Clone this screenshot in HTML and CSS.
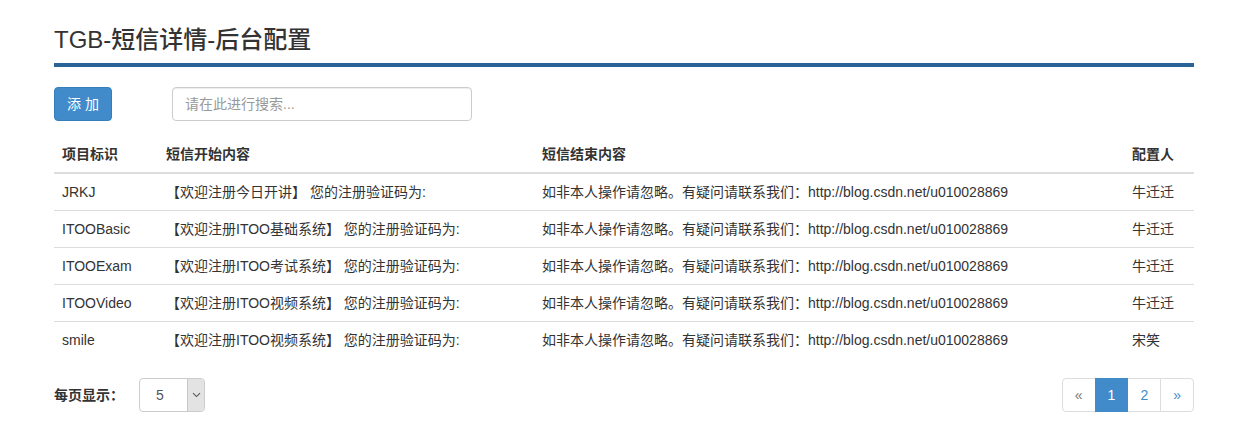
FILE: index.html
```html
<!DOCTYPE html>
<html lang="zh-CN">
<head>
<meta charset="utf-8">
<title>TGB-短信详情-后台配置</title>
<link rel="stylesheet" href="styles.css">
</head>
<body>
<div class="page">
  <h1 class="page-title">TGB-短信详情-后台配置</h1>

  <div class="toolbar">
    <button class="btn-primary" type="button">添 加</button>
    <input class="search" type="text" placeholder="请在此进行搜索...">
  </div>

  <table class="grid">
    <colgroup>
      <col class="c-id">
      <col class="c-start">
      <col class="c-end">
      <col class="c-user">
    </colgroup>
    <thead>
      <tr><th>项目标识</th><th>短信开始内容</th><th>短信结束内容</th><th>配置人</th></tr>
    </thead>
    <tbody>
      <tr><td>JRKJ</td><td>【欢迎注册今日开讲】 您的注册验证码为:</td><td>如非本人操作请忽略。有疑问请联系我们：http://blog.csdn.net/u010028869</td><td>牛迁迁</td></tr>
      <tr><td>ITOOBasic</td><td>【欢迎注册ITOO基础系统】 您的注册验证码为:</td><td>如非本人操作请忽略。有疑问请联系我们：http://blog.csdn.net/u010028869</td><td>牛迁迁</td></tr>
      <tr><td>ITOOExam</td><td>【欢迎注册ITOO考试系统】 您的注册验证码为:</td><td>如非本人操作请忽略。有疑问请联系我们：http://blog.csdn.net/u010028869</td><td>牛迁迁</td></tr>
      <tr><td>ITOOVideo</td><td>【欢迎注册ITOO视频系统】 您的注册验证码为:</td><td>如非本人操作请忽略。有疑问请联系我们：http://blog.csdn.net/u010028869</td><td>牛迁迁</td></tr>
      <tr><td>smile</td><td>【欢迎注册ITOO视频系统】 您的注册验证码为:</td><td>如非本人操作请忽略。有疑问请联系我们：http://blog.csdn.net/u010028869</td><td>宋笑</td></tr>
    </tbody>
  </table>

  <div class="footer-bar">
    <div class="page-size">
      <span class="page-size-label">每页显示：</span>
      <div class="select-box">
        <span class="select-value">5</span>
        <span class="select-arrow">
          <svg width="9" height="6" viewBox="0 0 9 6"><path d="M1 1.2 L4.5 4.6 L8 1.2" fill="none" stroke="#555" stroke-width="1.1"/></svg>
        </span>
      </div>
    </div>
    <ul class="pager">
      <li class="pg disabled">«</li>
      <li class="pg active">1</li>
      <li class="pg">2</li>
      <li class="pg">»</li>
    </ul>
  </div>
</div>
</body>
</html>
```

FILE: styles.css
```css
* { box-sizing: border-box; }

body {
  margin: 0;
  font-family: "Liberation Sans", Arial, "Noto Sans CJK SC", sans-serif;
  font-size: 14px;
  line-height: 20px;
  color: #333;
  background: #fff;
}

.page {
  width: 1140px;
  margin-left: 54px;
  padding-top: 27px;
}

.page-title {
  margin: 0;
  font-size: 24px;
  line-height: 26px;
  height: 36px;
  font-weight: 500;
  color: #333;
  padding-bottom: 10px;
  border-bottom: 4px solid #2a6496;
  box-sizing: content-box;
  height: 26px;
}

.toolbar {
  margin-top: 20px;
  display: flex;
  align-items: center;
  gap: 60px;
  height: 34px;
}

.btn-primary {
  width: 58px;
  height: 34px;
  padding: 6px 12px;
  font-family: inherit;
  font-size: 14px;
  line-height: 20px;
  color: #fff;
  background: #428bca;
  border: 1px solid #357ebd;
  border-radius: 4px;
  white-space: nowrap;
}

.search {
  width: 300px;
  height: 34px;
  padding: 6px 12px;
  font-family: inherit;
  font-size: 14px;
  color: #555;
  border: 1px solid #ccc;
  border-radius: 4px;
  box-shadow: inset 0 1px 1px rgba(0,0,0,.075);
  outline: none;
}
.search::placeholder { color: #999; }

.grid {
  margin-top: 15px;
  width: 1140px;
  table-layout: fixed;
  border-collapse: collapse;
  border-spacing: 0;
}
.c-id { width: 104px; }
.c-start { width: 376px; }
.c-end { width: 590px; }
.c-user { width: 70px; }

.grid th {
  text-align: left;
  font-weight: bold;
  padding: 8px;
  height: 36px;
  line-height: 20px;
  border-bottom: 2px solid #ddd;
  white-space: nowrap;
}
.grid td {
  padding: 8px;
  height: 36px;
  line-height: 20px;
  border-top: 1px solid #ddd;
  white-space: nowrap;
  overflow: hidden;
}

.footer-bar {
  margin-top: 20px;
  display: flex;
  justify-content: space-between;
  align-items: center;
  height: 34px;
}

.page-size {
  display: flex;
  align-items: center;
}
.page-size-label {
  font-weight: bold;
  width: 85px;
}
.select-box {
  display: flex;
  width: 66px;
  height: 34px;
  border: 1px solid #ccc;
  border-radius: 4px;
  overflow: hidden;
  background: #fff;
}
.select-value {
  flex: 1;
  line-height: 32px;
  padding-left: 16px;
  color: #555;
}
.select-arrow {
  width: 17px;
  display: flex;
  align-items: center;
  justify-content: center;
  background: #e3e3e3;
  border-left: 1px solid #c8c8c8;
}

.pager {
  display: flex;
  list-style: none;
  margin: 0;
  padding: 0;
}
.pg {
  height: 34px;
  padding: 6px 12px;
  line-height: 20px;
  color: #428bca;
  border: 1px solid #ddd;
  margin-left: -1px;
  background: #fff;
}
.pg:first-child {
  margin-left: 0;
  border-radius: 4px 0 0 4px;
}
.pg:last-child { border-radius: 0 4px 4px 0; }
.pg.disabled { color: #777; }
.pg.active {
  background: #428bca;
  border-color: #428bca;
  color: #fff;
  position: relative;
}
```
